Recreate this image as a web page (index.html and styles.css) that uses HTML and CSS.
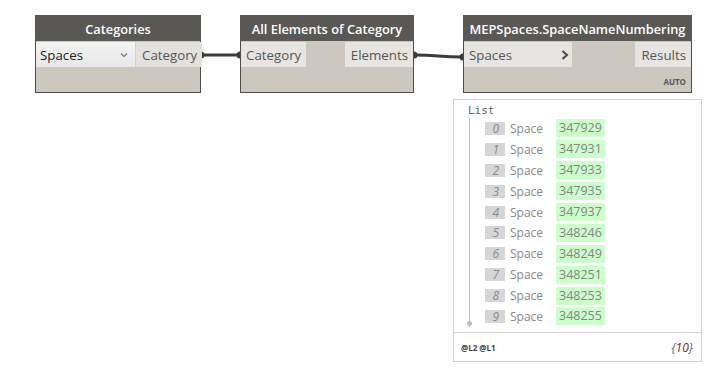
FILE: index.html
```html
<!DOCTYPE html>
<html lang="en">
<head>
    <meta charset="UTF-8">
    <title>Dynamo graph</title>
    <link rel="stylesheet" href="styles.css">
</head>
<body>
    <div class="canvas">
        <svg class="wires" width="728" height="372">
            <path d="M201 55 L240 55" />
            <path d="M414 55 C 440 55, 437 57, 463 57" />
            <circle cx="201" cy="55" r="3.5" />
            <circle cx="240" cy="55" r="3.5" />
            <circle cx="414" cy="55" r="3.5" />
            <circle cx="463" cy="57" r="3.5" />
        </svg>

        <!-- Categories -->
        <div class="node node-categories">
            <div class="node-header">Categories</div>
            <div class="ports">
                <div class="dropdown">
                    <span>Spaces</span>
                    <svg class="chev" width="8" height="6" viewBox="0 0 8 6"><path d="M1 1.5 L4 4.5 L7 1.5" /></svg>
                </div>
                <div class="port out">Category</div>
            </div>
            <div class="node-body"></div>
        </div>

        <!-- All Elements of Category -->
        <div class="node node-elements">
            <div class="node-header">All Elements of Category</div>
            <div class="ports">
                <div class="port in">Category</div>
                <div class="port out">Elements</div>
            </div>
            <div class="node-body"></div>
        </div>

        <!-- MEPSpaces.SpaceNameNumbering -->
        <div class="node node-mep">
            <div class="node-header">MEPSpaces.SpaceNameNumbering</div>
            <div class="ports">
                <div class="port in wide">
                    <span>Spaces</span>
                    <svg class="arrow" width="8" height="10" viewBox="0 0 8 10"><path d="M1.5 1 L6 5 L1.5 9" /></svg>
                </div>
                <div class="port out">Results</div>
            </div>
            <div class="node-body">
                <span class="lacing">AUTO</span>
            </div>
        </div>

        <!-- Watch preview -->
        <div class="preview">
            <div class="preview-list">
                <div class="list-title">List</div>
                <div class="list-items">
                    <div class="row"><span class="idx">0</span><span class="type">Space</span><span class="val">347929</span></div>
                    <div class="row"><span class="idx">1</span><span class="type">Space</span><span class="val">347931</span></div>
                    <div class="row"><span class="idx">2</span><span class="type">Space</span><span class="val">347933</span></div>
                    <div class="row"><span class="idx">3</span><span class="type">Space</span><span class="val">347935</span></div>
                    <div class="row"><span class="idx">4</span><span class="type">Space</span><span class="val">347937</span></div>
                    <div class="row"><span class="idx">5</span><span class="type">Space</span><span class="val">348246</span></div>
                    <div class="row"><span class="idx">6</span><span class="type">Space</span><span class="val">348249</span></div>
                    <div class="row"><span class="idx">7</span><span class="type">Space</span><span class="val">348251</span></div>
                    <div class="row"><span class="idx">8</span><span class="type">Space</span><span class="val">348253</span></div>
                    <div class="row"><span class="idx">9</span><span class="type">Space</span><span class="val">348255</span></div>
                </div>
            </div>
            <div class="preview-footer">
                <span class="levels">@L2 @L1</span>
                <span class="count">{<em>10</em>}</span>
            </div>
        </div>
    </div>
</body>
</html>
```

FILE: styles.css
```css
body {
    margin: 0;
    background: #ffffff;
    font-family: "Open Sans", "Noto Sans", sans-serif;
}

.canvas {
    position: relative;
    width: 728px;
    height: 372px;
    overflow: hidden;
}

.wires {
    position: absolute;
    left: 0;
    top: 0;
}

.wires path {
    fill: none;
    stroke: #3b3b3b;
    stroke-width: 3.2;
}

.wires circle {
    fill: #3b3b3b;
}

.node {
    position: absolute;
    top: 15px;
    height: 78px;
    display: flex;
    flex-direction: column;
    background: #ccc8c0;
    border: 1px solid #4f4d4a;
    border-top: none;
    box-sizing: border-box;
}

.node-categories { left: 35px; width: 166px; }
.node-elements { left: 240px; width: 174px; }
.node-mep { left: 463px; width: 229px; }

.node-header {
    height: 26px;
    padding-top: 1px;
    box-sizing: border-box;
    margin: 0 -1px;
    background: #5a5855;
    color: #ffffff;
    font-size: 12.8px;
    font-weight: 600;
    display: flex;
    align-items: center;
    justify-content: center;
    white-space: nowrap;
}

.ports {
    height: 26px;
    padding-top: 1px;
    box-sizing: border-box;
    display: flex;
    justify-content: space-between;
    background: #ccc8c0;
}

.port {
    background: #e6e5e1;
    color: #555555;
    font-size: 13.3px;
    display: flex;
    align-items: center;
    padding: 0 5px 0 6px;
    flex-shrink: 0;
}

.port.in { padding-left: 5px; }

.port.wide {
    width: 108px;
    box-sizing: border-box;
    justify-content: space-between;
    padding-right: 3px;
}

.arrow path {
    fill: none;
    stroke: #4a4a4a;
    stroke-width: 2;
}

.dropdown {
    width: 100px;
    flex-shrink: 0;
    box-sizing: border-box;
    background: linear-gradient(#f3f3f3, #e8e8e8);
    border-right: 1px solid #d4d2cd;
    display: flex;
    align-items: center;
    justify-content: space-between;
    padding: 0 7px 0 4px;
    font-size: 13.3px;
    color: #222222;
}

.chev path {
    fill: none;
    stroke: #777777;
    stroke-width: 1.2;
}

.node-categories .port.out {
    flex: 1;
    flex-shrink: 1;
    background: #e2e1dc;
    justify-content: flex-end;
}

.node-body {
    flex: 1;
    display: flex;
    justify-content: flex-end;
    align-items: flex-end;
    padding: 0 5px 5px 0;
}

.lacing {
    font-size: 8px;
    font-weight: 700;
    color: #555555;
}

.preview {
    position: absolute;
    left: 453px;
    top: 99px;
    width: 249px;
    height: 263px;
    box-sizing: border-box;
    border: 1px solid #d2d2d2;
    background: #ffffff;
    display: flex;
    flex-direction: column;
}

.preview-list {
    flex: 1;
    padding: 4px 0 0 14px;
}

.list-title {
    font-family: "DejaVu Sans Mono", monospace;
    font-size: 11px;
    color: #666666;
    height: 14px;
}

.list-items {
    margin-left: 1px;
    border-left: 1px solid #bdbdbd;
    padding: 0 0 0 15px;
    position: relative;
}

.list-items::after {
    content: "";
    position: absolute;
    left: -3px;
    bottom: 1px;
    width: 5px;
    height: 5px;
    border-radius: 50%;
    background: #bdbdbd;
}

.row {
    display: flex;
    align-items: center;
    height: 20.9px;
}

.idx {
    width: 20px;
    height: 13px;
    background: #d6d6d6;
    color: #8a8a8a;
    font-size: 12px;
    font-style: italic;
    line-height: 13px;
    text-align: right;
    padding-right: 6px;
    box-sizing: border-box;
    margin-right: 5px;
}

.type {
    width: 46px;
    font-size: 12px;
    color: #8a8a8a;
}

.val {
    background: #ccffcc;
    color: #858585;
    font-size: 12.5px;
    line-height: 18px;
    padding: 0 3px;
}

.preview-footer {
    height: 28px;
    border-top: 1px solid #d2d2d2;
    display: flex;
    align-items: center;
    justify-content: space-between;
    padding: 0 8px 0 7px;
}

.levels {
    font-size: 8px;
    font-weight: 700;
    color: #444444;
}

.count {
    font-size: 12px;
    font-style: italic;
    color: #666666;
}

.count em {
    color: #8b1a1a;
}
```
